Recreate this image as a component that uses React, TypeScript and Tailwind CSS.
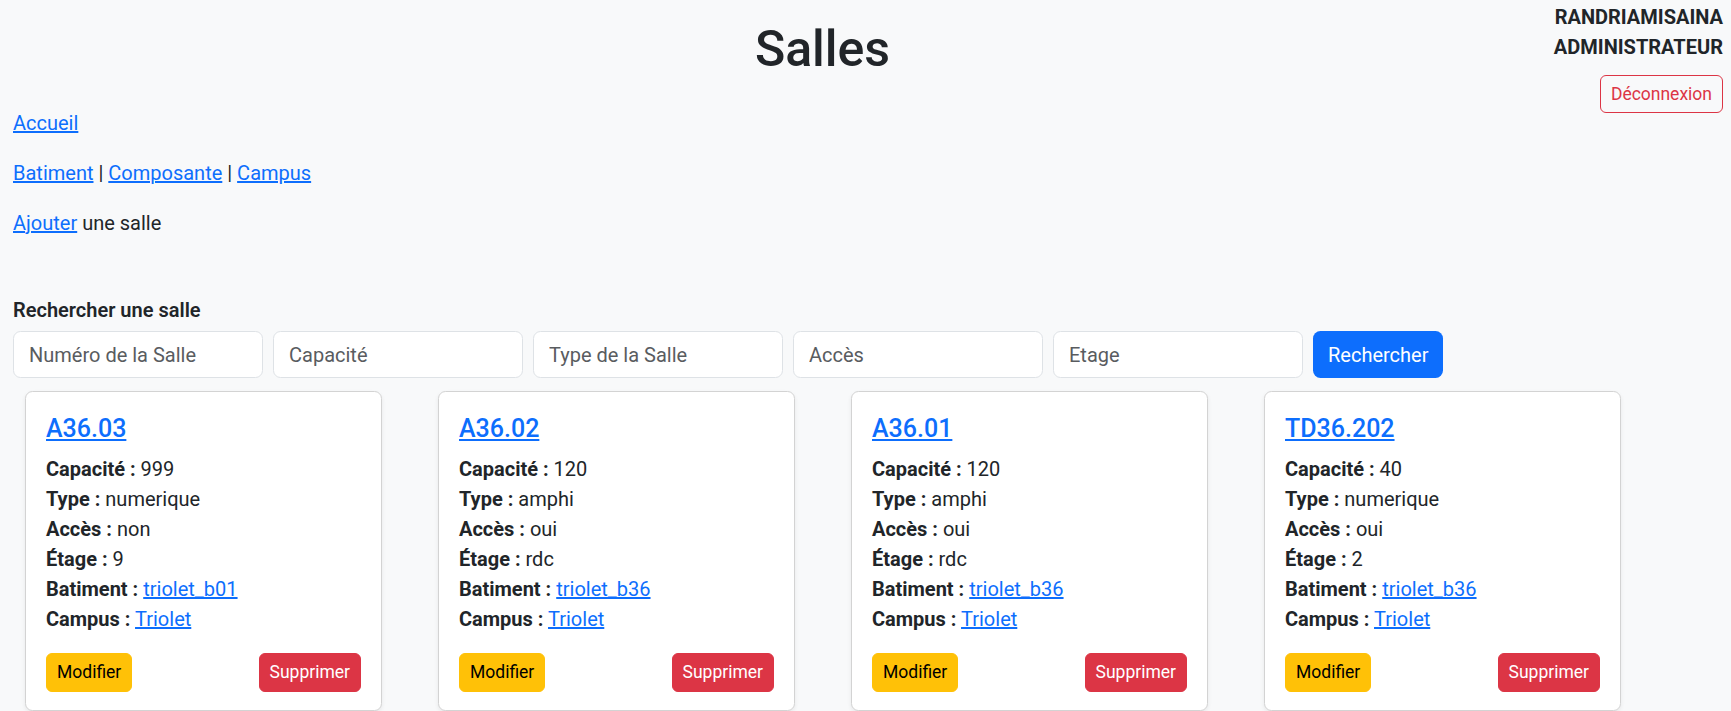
import React from "react";

type Salle = {
  numero: string;
  capacite: string;
  type: string;
  acces: string;
  etage: string;
  batiment: string;
  campus: string;
};

const salles: Salle[] = [
  { numero: "A36.03", capacite: "999", type: "numerique", acces: "non", etage: "9", batiment: "triolet_b01", campus: "Triolet" },
  { numero: "A36.02", capacite: "120", type: "amphi", acces: "oui", etage: "rdc", batiment: "triolet_b36", campus: "Triolet" },
  { numero: "A36.01", capacite: "120", type: "amphi", acces: "oui", etage: "rdc", batiment: "triolet_b36", campus: "Triolet" },
  { numero: "TD36.202", capacite: "40", type: "numerique", acces: "oui", etage: "2", batiment: "triolet_b36", campus: "Triolet" },
];

const searchFields = ["Numéro de la Salle", "Capacité", "Type de la Salle", "Accès", "Etage"];

function Link({ children }: { children: React.ReactNode }) {
  return <a href="#" className="text-[#0d6efd] underline">{children}</a>;
}

function SalleCard({ salle }: { salle: Salle }) {
  return (
    <div className="rounded-[7.5px] border border-[#d3d3d3] bg-white px-[20px] pt-[22px] pb-[18px] shadow-[0_2px_4px_rgba(0,0,0,0.075)]">
      <h5 className="mb-[10px] text-[25px] font-medium leading-[30px]">
        <Link>{salle.numero}</Link>
      </h5>
      <div>
        <div><b>Capacité :</b> {salle.capacite}</div>
        <div><b>Type :</b> {salle.type}</div>
        <div><b>Accès :</b> {salle.acces}</div>
        <div><b>Étage :</b> {salle.etage}</div>
        <div><b>Batiment :</b> <Link>{salle.batiment}</Link></div>
        <div><b>Campus :</b> <Link>{salle.campus}</Link></div>
      </div>
      <div className="mt-[19px] flex justify-between">
        <button className="rounded-[6px] border border-[#ffc107] bg-[#ffc107] px-[10px] py-[5px] text-[17.5px] leading-[27px] text-black">
          Modifier
        </button>
        <button className="rounded-[6px] border border-[#dc3545] bg-[#dc3545] px-[10px] py-[5px] text-[17.5px] leading-[27px] text-white">
          Supprimer
        </button>
      </div>
    </div>
  );
}

export default function App() {
  return (
    <div className="relative min-h-screen bg-[#f8f9fa] font-['Segoe_UI',Roboto,sans-serif] text-[20px] leading-[30px] text-[#212529]">
      {/* user block, top right */}
      <div className="absolute right-[8px] top-[2px] flex flex-col items-end">
        <span className="font-bold">RANDRIAMISAINA</span>
        <span className="font-bold">ADMINISTRATEUR</span>
        <button className="mt-[13px] rounded-[6px] border border-[#dc3545] px-[10px] py-[5px] text-[17.5px] leading-[26px] text-[#dc3545]">
          Déconnexion
        </button>
      </div>

      <h1 className="pt-[19px] pr-[86px] text-center text-[50px] font-medium leading-[60px]">Salles</h1>

      <div className="px-[13px] pt-[29px]">
        <p className="mb-[20px]"><Link>Accueil</Link></p>
        <p className="mb-[20px]">
          <Link>Batiment</Link> | <Link>Composante</Link> | <Link>Campus</Link>
        </p>
        <p className="mb-[57px]"><Link>Ajouter</Link> une salle</p>

        <label className="mb-[6px] block font-semibold">Rechercher une salle</label>
        <div className="flex gap-[10px]">
          {searchFields.map((f) => (
            <input
              key={f}
              placeholder={f}
              className="h-[47px] w-[250px] rounded-[7.5px] border border-[#dee2e6] bg-white px-[15px] text-[20px] placeholder:text-[#595c5f]"
            />
          ))}
          <button className="h-[47px] rounded-[7.5px] bg-[#0d6efd] px-[15px] text-white">Rechercher</button>
        </div>
      </div>

      <div className="mt-[13px] grid grid-cols-[repeat(4,357px)] gap-x-[56px] pl-[25px]">
        {salles.map((s) => (
          <SalleCard key={s.numero} salle={s} />
        ))}
      </div>
    </div>
  );
}
